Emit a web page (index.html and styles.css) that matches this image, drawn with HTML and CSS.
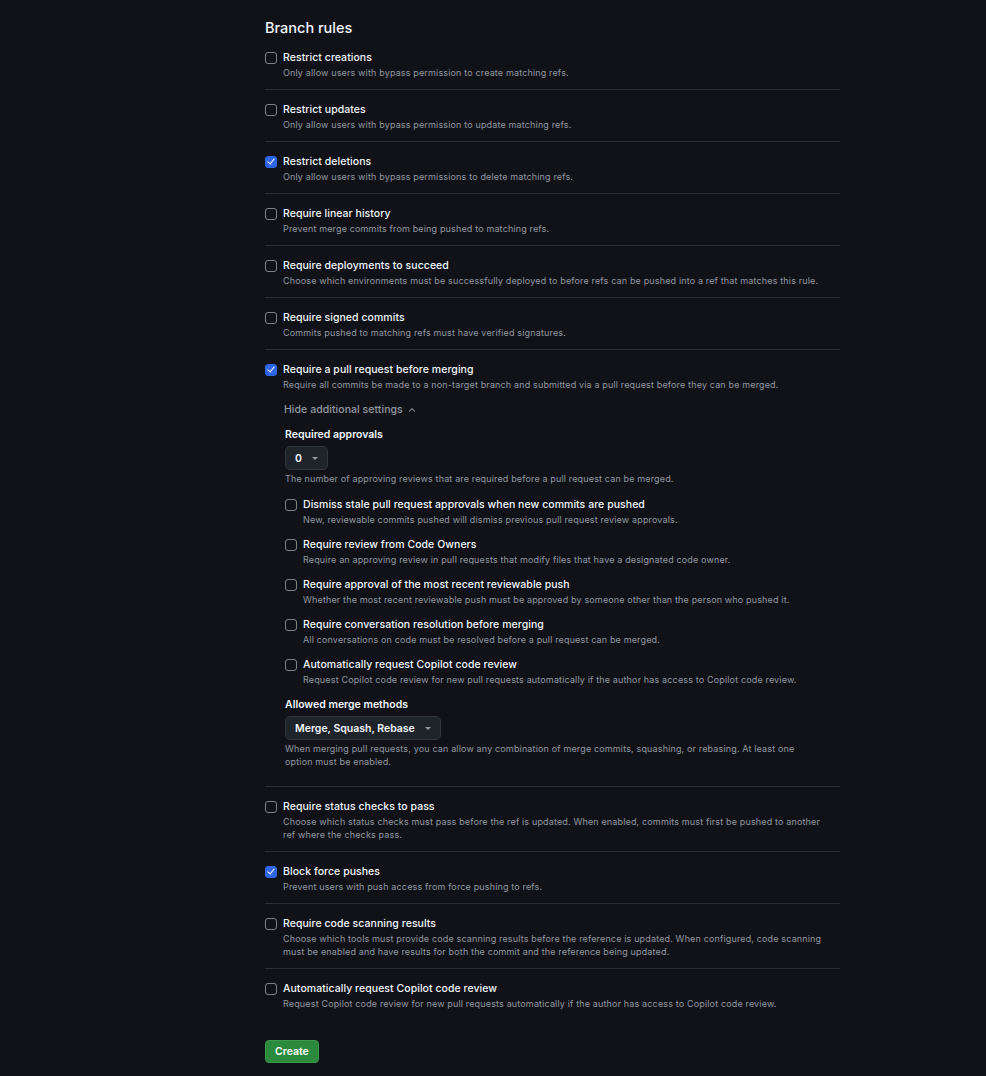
FILE: index.html
```html
<!DOCTYPE html>
<html lang="en">
<head>
<meta charset="utf-8">
<title>Branch rules</title>
<link rel="stylesheet" href="styles.css">
</head>
<body>
<main class="page">
  <h2 class="heading">Branch rules</h2>
  <ul class="rules">
    <li class="rule">
      <label class="opt">
        <input type="checkbox" class="cb">
        <span class="opt-body">
          <span class="title">Restrict creations</span>
          <span class="desc">Only allow users with bypass permission to create matching refs.</span>
        </span>
      </label>
    </li>
    <li class="rule">
      <label class="opt">
        <input type="checkbox" class="cb">
        <span class="opt-body">
          <span class="title">Restrict updates</span>
          <span class="desc">Only allow users with bypass permission to update matching refs.</span>
        </span>
      </label>
    </li>
    <li class="rule">
      <label class="opt">
        <input type="checkbox" class="cb" checked>
        <span class="opt-body">
          <span class="title">Restrict deletions</span>
          <span class="desc">Only allow users with bypass permissions to delete matching refs.</span>
        </span>
      </label>
    </li>
    <li class="rule">
      <label class="opt">
        <input type="checkbox" class="cb">
        <span class="opt-body">
          <span class="title">Require linear history</span>
          <span class="desc">Prevent merge commits from being pushed to matching refs.</span>
        </span>
      </label>
    </li>
    <li class="rule">
      <label class="opt">
        <input type="checkbox" class="cb">
        <span class="opt-body">
          <span class="title">Require deployments to succeed</span>
          <span class="desc">Choose which environments must be successfully deployed to before refs can be pushed into a ref that matches this rule.</span>
        </span>
      </label>
    </li>
    <li class="rule">
      <label class="opt">
        <input type="checkbox" class="cb">
        <span class="opt-body">
          <span class="title">Require signed commits</span>
          <span class="desc">Commits pushed to matching refs must have verified signatures.</span>
        </span>
      </label>
    </li>
    <li class="rule rule-expanded">
      <label class="opt">
        <input type="checkbox" class="cb" checked>
        <span class="opt-body">
          <span class="title">Require a pull request before merging</span>
          <span class="desc">Require all commits be made to a non-target branch and submitted via a pull request before they can be merged.</span>
        </span>
      </label>
      <div class="extras">
        <button type="button" class="toggle">Hide additional settings
          <svg class="chev" viewBox="0 0 16 16" width="10" height="10"><path d="M3.22 10.53a.75.75 0 0 1 0-1.06l4.25-4.25a.75.75 0 0 1 1.06 0l4.25 4.25a.75.75 0 0 1-1.06 1.06L8 6.81 4.28 10.53a.75.75 0 0 1-1.06 0Z" fill="currentColor"/></svg>
        </button>
        <div class="field-label field-first">Required approvals</div>
        <button type="button" class="select">0 <span class="caret"></span></button>
        <div class="desc field-note">The number of approving reviews that are required before a pull request can be merged.</div>
        <div class="subopts">
          <label class="opt">
            <input type="checkbox" class="cb">
            <span class="opt-body">
              <span class="title">Dismiss stale pull request approvals when new commits are pushed</span>
              <span class="desc">New, reviewable commits pushed will dismiss previous pull request review approvals.</span>
            </span>
          </label>
          <label class="opt">
            <input type="checkbox" class="cb">
            <span class="opt-body">
              <span class="title">Require review from Code Owners</span>
              <span class="desc">Require an approving review in pull requests that modify files that have a designated code owner.</span>
            </span>
          </label>
          <label class="opt">
            <input type="checkbox" class="cb">
            <span class="opt-body">
              <span class="title">Require approval of the most recent reviewable push</span>
              <span class="desc">Whether the most recent reviewable push must be approved by someone other than the person who pushed it.</span>
            </span>
          </label>
          <label class="opt">
            <input type="checkbox" class="cb">
            <span class="opt-body">
              <span class="title">Require conversation resolution before merging</span>
              <span class="desc">All conversations on code must be resolved before a pull request can be merged.</span>
            </span>
          </label>
          <label class="opt">
            <input type="checkbox" class="cb">
            <span class="opt-body">
              <span class="title">Automatically request Copilot code review</span>
              <span class="desc">Request Copilot code review for new pull requests automatically if the author has access to Copilot code review.</span>
            </span>
          </label>
        </div>
        <div class="field-label">Allowed merge methods</div>
        <button type="button" class="select">Merge, Squash, Rebase <span class="caret"></span></button>
        <div class="desc field-note">When merging pull requests, you can allow any combination of merge commits, squashing, or rebasing. At least one<br>option must be enabled.</div>
      </div>
    </li>
    <li class="rule">
      <label class="opt">
        <input type="checkbox" class="cb">
        <span class="opt-body">
          <span class="title">Require status checks to pass</span>
          <span class="desc">Choose which status checks must pass before the ref is updated. When enabled, commits must first be pushed to another<br>ref where the checks pass.</span>
        </span>
      </label>
    </li>
    <li class="rule">
      <label class="opt">
        <input type="checkbox" class="cb" checked>
        <span class="opt-body">
          <span class="title">Block force pushes</span>
          <span class="desc">Prevent users with push access from force pushing to refs.</span>
        </span>
      </label>
    </li>
    <li class="rule">
      <label class="opt">
        <input type="checkbox" class="cb">
        <span class="opt-body">
          <span class="title">Require code scanning results</span>
          <span class="desc">Choose which tools must provide code scanning results before the reference is updated. When configured, code scanning<br>must be enabled and have results for both the commit and the reference being updated.</span>
        </span>
      </label>
    </li>
    <li class="rule">
      <label class="opt">
        <input type="checkbox" class="cb">
        <span class="opt-body">
          <span class="title">Automatically request Copilot code review</span>
          <span class="desc">Request Copilot code review for new pull requests automatically if the author has access to Copilot code review.</span>
        </span>
      </label>
    </li>
  </ul>
  <button type="button" class="btn-create">Create</button>
</main>
</body>
</html>
```

FILE: styles.css
```css
html, body {
  margin: 0;
  padding: 0;
  background: #111217;
}
body {
  font-family: Inter, "Noto Sans", "Liberation Sans", sans-serif;
  color: #f0f6fc;
  height: 1076px;
  overflow: hidden;
}
.page {
  margin-left: 265px;
  width: 575px;
  padding-top: 18px;
}
.heading {
  margin: 0;
  font-size: 14.5px;
  line-height: 20px;
  font-weight: 500;
  color: #f0f6fc;
}
.rules {
  list-style: none;
  margin: 0;
  padding: 0;
}
.rule {
  padding: 12px 0 10px;
  border-top: 1px solid #2a2e35;
}
.rule:first-child {
  border-top: none;
}
.opt {
  display: flex;
  align-items: flex-start;
  gap: 6px;
  cursor: pointer;
}
.opt-body {
  display: flex;
  flex-direction: column;
}
.title {
  font-size: 10.5px;
  line-height: 15px;
  font-weight: 500;
  letter-spacing: 0.05px;
  color: #f0f6fc;
}
.desc {
  font-size: 9px;
  line-height: 13px;
  letter-spacing: 0.15px;
  color: #9198a1;
  margin-top: 1px;
}
.cb {
  appearance: none;
  -webkit-appearance: none;
  margin: 1.5px 0 0;
  width: 12px;
  height: 12px;
  flex: none;
  border: 1px solid #7d838c;
  border-radius: 3px;
  background: transparent;
  box-sizing: border-box;
  position: relative;
}
.cb:checked {
  background: #2f66e6;
  border-color: #2f66e6;
}
.cb:checked::after {
  content: "";
  position: absolute;
  left: 3.3px;
  top: 0.6px;
  width: 3px;
  height: 6px;
  border: solid #fff;
  border-width: 0 1.4px 1.4px 0;
  transform: rotate(40deg);
}
.extras {
  padding-left: 19px;
  padding-bottom: 8px;
  display: flex;
  flex-direction: column;
  align-items: flex-start;
}
.toggle {
  margin-top: 11px;
  padding: 0;
  background: none;
  border: none;
  font-family: inherit;
  font-size: 10.5px;
  line-height: 15px;
  font-weight: 500;
  letter-spacing: 0.05px;
  color: #9198a1;
  display: flex;
  align-items: center;
  gap: 4px;
}
.chev {
  display: block;
}
.field-label {
  margin-top: 11px;
  padding-left: 1px;
  font-size: 10.5px;
  line-height: 15px;
  font-weight: 600;
  color: #f0f6fc;
}
.field-first {
  margin-top: 10px;
}
.select {
  margin: 4px 0 0 1px;
  height: 24px;
  padding: 0 9px;
  display: flex;
  align-items: center;
  gap: 10px;
  background: #1f232a;
  border: 1px solid #30363d;
  border-radius: 5px;
  font-family: inherit;
  font-size: 10.5px;
  font-weight: 600;
  color: #f0f6fc;
}
.caret {
  width: 0;
  height: 0;
  border-left: 3px solid transparent;
  border-right: 3px solid transparent;
  border-top: 3px solid #9198a1;
}
.field-note {
  margin-top: 2px;
  padding-left: 1px;
}
.subopts {
  margin-top: 12px;
  padding-left: 1px;
  display: flex;
  flex-direction: column;
  gap: 11px;
}
.btn-create {
  margin-top: 20px;
  height: 23px;
  padding: 0 9px;
  background: #2b8a3e;
  border: 1px solid #3b9a4c;
  border-radius: 4px;
  font-family: inherit;
  font-size: 10.5px;
  font-weight: 600;
  color: #ffffff;
}
```
